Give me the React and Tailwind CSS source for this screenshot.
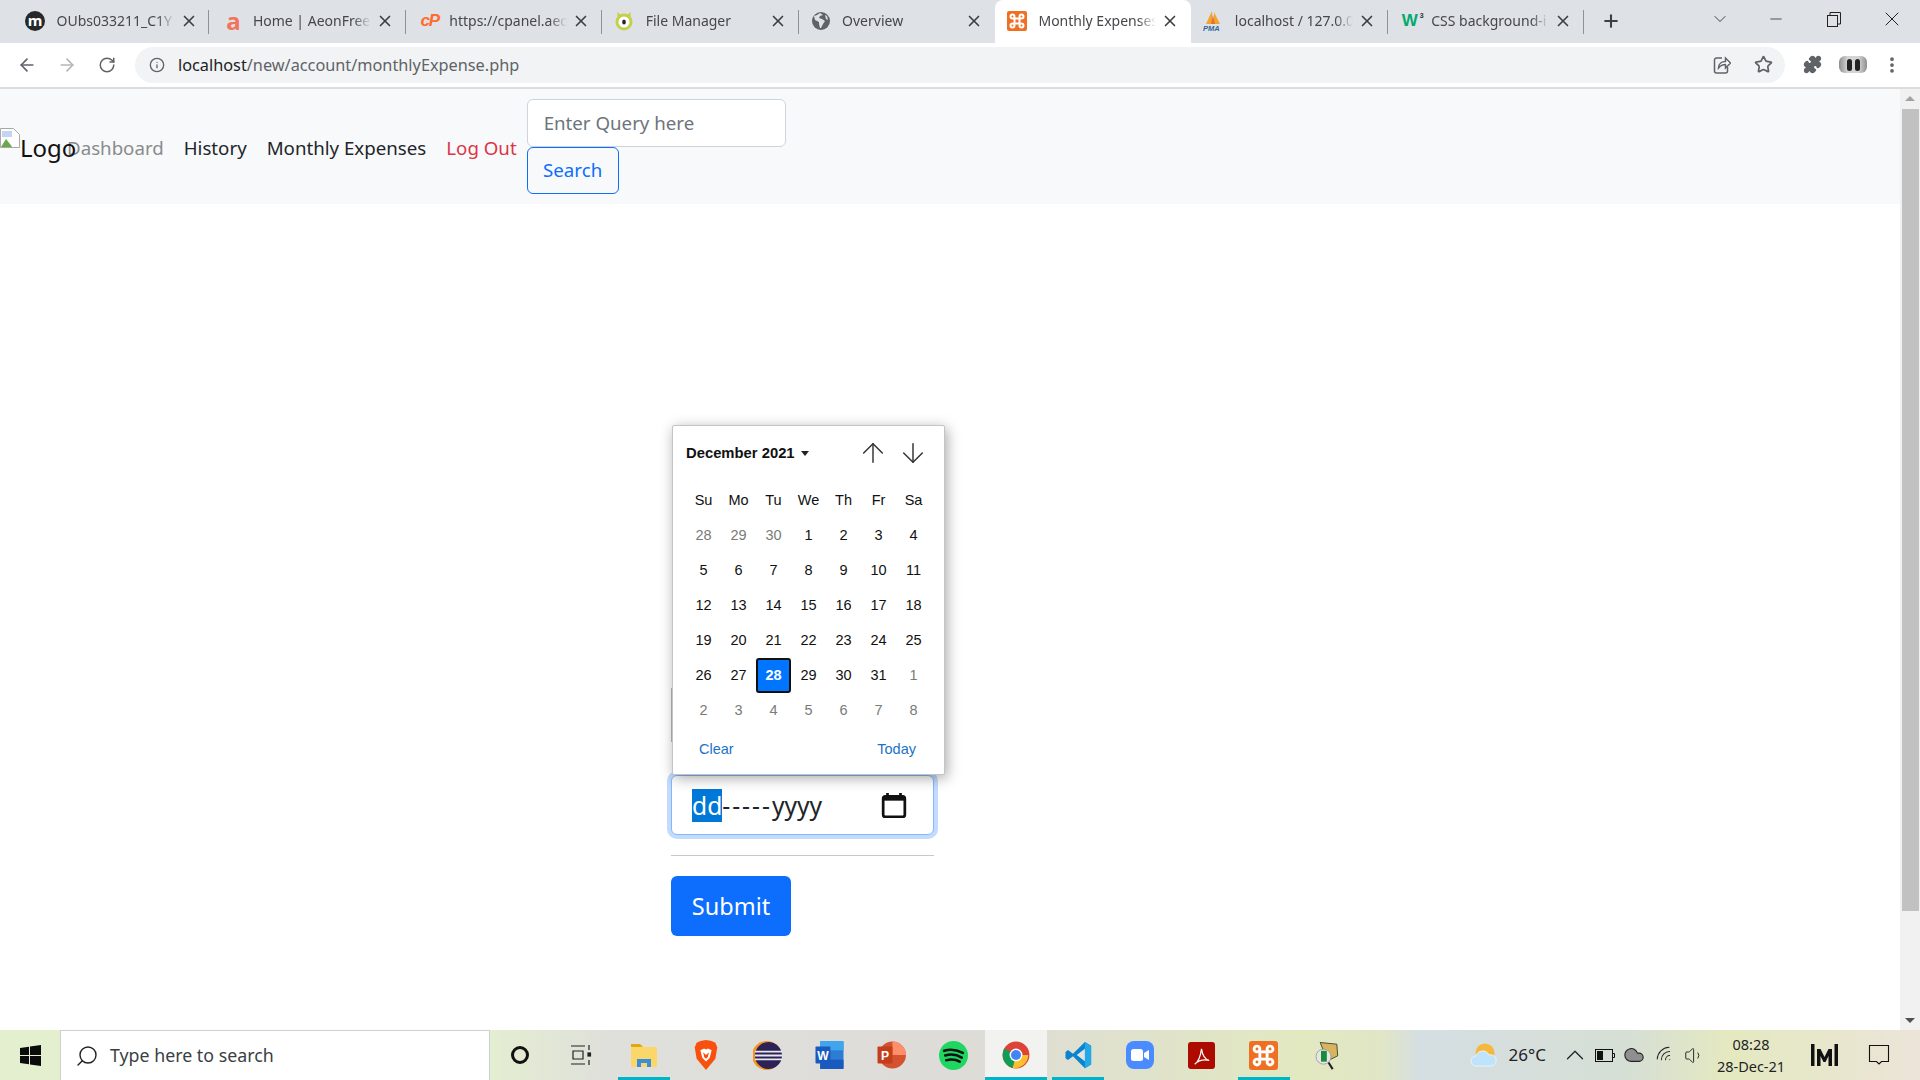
import { ArrowLeft, ArrowRight, RotateCw, Info, Star, Puzzle, EllipsisVertical, X, Plus, ChevronDown, ChevronUp, Minus, Search, ArrowUp, ArrowDown, Wifi, Volume1, Cloud } from "lucide-react";

const Moodle = () => (
  <span className="flex h-5 w-5 items-center justify-center rounded-full bg-[#26282a] text-[15px] font-bold leading-none text-white">m</span>
);
const Aeon = () => (
  <span className="ml-[2px] flex h-5 w-5 items-center justify-center text-[24px] font-bold leading-none text-[#f0755a] font-['Noto_Sans']">a</span>
);
const Cpanel = () => (
  <span className="flex h-5 w-6 items-center justify-center text-[17px] font-bold italic leading-none tracking-[-1px] text-[#ff6c2c] font-['Liberation_Sans']">cP</span>
);
const Monster = () => (
  <svg width="20" height="20" viewBox="0 0 20 20">
    <path d="M3 1l4 3-3 3zM17 1l-4 3 3 3z" fill="#c5d04a" />
    <circle cx="10" cy="11" r="8.500" fill="#c5d04a" />
    <circle cx="10" cy="11" r="5.500" fill="#fff" />
    <ellipse cx="10" cy="11" rx="1.800" ry="2.500" fill="#222" />
  </svg>
);
const Globe = () => (
  <svg width="20" height="20" viewBox="0 0 20 20">
    <circle cx="10" cy="10" r="9" fill="#5f6368" />
    <path d="M9 2l-3 2-3 1 1 4 4 2v2l1 4h1l2-4 2-3-3-2-3-1 1-2 3-1zM14 4l2 1 1 4-2-1z" fill="#dee1e6" />
  </svg>
);
const Xampp = ({ size = 20 }) => (
  <svg width={size} height={size} viewBox="0 0 20 20">
    <rect width="20" height="20" rx="2" fill="#ed7024" />
    <g fill="none" stroke="#fff" strokeWidth="2">
      <rect x="7.500" y="7.500" width="5" height="5" />
      <circle cx="5.500" cy="5.500" r="2" />
      <circle cx="14.500" cy="5.500" r="2" />
      <circle cx="5.500" cy="14.500" r="2" />
      <circle cx="14.500" cy="14.500" r="2" />
    </g>
  </svg>
);
const Pma = () => (
  <svg width="20" height="20" viewBox="0 0 20 20">
    <path d="M3 13L9 0l1 13zM11 13V1l6 12z" fill="#f3a32f" />
    <path d="M8 13l2-9 2 9z" fill="#e2742a" />
    <text x="0" y="19.500" fontSize="7.500" fontWeight="700" fontStyle="italic" fill="#34659a" fontFamily="Liberation Sans, sans-serif">PMA</text>
  </svg>
);
const W3 = () => (
  <span className="relative ml-[2px] flex h-5 w-5 items-center text-[17px] font-bold leading-none text-[#04aa6d] font-['Liberation_Sans']">
    W<span className="absolute right-[-2px] top-[1px] text-[7px] text-[#333]">3</span>
  </span>
);

const tabs = [
  { title: "OUbs033211_C1Y", icon: <Moodle /> },
  { title: "Home | AeonFree", icon: <Aeon /> },
  { title: "https://cpanel.aeon", icon: <Cpanel /> },
  { title: "File Manager", icon: <Monster /> },
  { title: "Overview", icon: <Globe /> },
  { title: "Monthly Expenses", icon: <Xampp />, active: true },
  { title: "localhost / 127.0.0", icon: <Pma /> },
  { title: "CSS background-i", icon: <W3 /> },
];

const TitleBar = () => (
  <div className="flex h-[43px] items-stretch bg-[#dee1e6] pl-[13px]">
    {tabs.map((tab, i) => {
      // no divider beside the active tab
      const divider = !tab.active && !(tabs[i + 1] && tabs[i + 1].active);
      return (
        <div
          key={tab.title}
          className={
            tab.active
              ? "relative flex w-[196.4px] items-center rounded-t-lg bg-white pb-[2px] pl-[12px]"
              : "relative flex w-[196.4px] items-center pb-[2px] pl-[12px]"
          }
        >
          <div className="flex w-[31.500px] shrink-0 items-center">{tab.icon}</div>
          <div className="w-[118px] overflow-hidden whitespace-nowrap text-[14px] text-[#45474a] [mask-image:linear-gradient(to_right,black_85%,transparent)]">
            {tab.title}
          </div>
          <X size={18} strokeWidth={2.200} className="ml-[5px] shrink-0 text-[#3c4043]" />
          {divider && <div className="absolute right-0 top-[10px] h-[24px] w-px bg-[#8f9296]" />}
        </div>
      );
    })}
    <div className="ml-[17px] flex items-center pb-[2px]">
      <Plus size={20} strokeWidth={2.500} className="text-[#3c4043]" />
    </div>
    <div className="ml-auto flex items-start">
      <div className="flex h-[38px] w-[46px] items-center justify-center">
        <ChevronDown size={20} strokeWidth={1} className="text-[#222]" />
      </div>
      <div className="ml-[4px] flex h-[38px] w-[58px] items-center justify-center">
        <Minus size={18} strokeWidth={1} className="text-[#222]" />
      </div>
      <div className="flex h-[38px] w-[58px] items-center justify-center">
        <svg width="14" height="15" viewBox="0 0 14 15" fill="none" stroke="#222">
          <rect x="0.500" y="3.500" width="10" height="11" />
          <path d="M3 3V.5h10.500V12H11" />
        </svg>
      </div>
      <div className="flex h-[38px] w-[57px] items-center justify-center">
        <X size={24} strokeWidth={1} className="text-[#222]" />
      </div>
    </div>
  </div>
);

const Toolbar = () => (
  <div className="flex h-[46px] items-center border-b-2 border-[#dcdcdc] bg-white pb-[1px]">
    <div className="flex w-[135px] items-center pl-[17px] text-[#5f6368]">
      <ArrowLeft size={20} />
      <ArrowRight size={20} className="ml-[20px] text-[#b4b6b9]" />
      <RotateCw size={18} className="ml-[21px]" />
    </div>
    <div className="flex h-[36px] w-[1650px] items-center rounded-full bg-[#f1f3f4] pl-[14px]">
      <Info size={16} className="text-[#5f6368]" />
      <div className="ml-[13px] mt-[1px] text-[16.300px] text-[#5f6368]">
        <span className="text-[#202124]">localhost</span>/new/account/monthlyExpense.php
      </div>
      <svg width="18" height="20" viewBox="0 0 18 20" fill="none" stroke="#5f6368" strokeWidth="1.500" className="ml-auto mr-[23px]">
        <path d="M9 3H3.500A2 2 0 0 0 1.500 5v11a2 2 0 0 0 2 2h9a2 2 0 0 0 2-2v-4" />
        <path d="M5.500 13c0-4 3-6.500 7-6.500V3l5 5-5 5V9.500c-3 0-5 1-7 3.500z" fill="#fff" />
      </svg>
      <Star size={19} className="mr-[12px] text-[#5f6368]" strokeWidth={2.200} />
    </div>
    <Puzzle size={19} className="ml-[18px] fill-[#5f6368] text-[#5f6368]" />
    <div className="ml-[17px] flex h-[17px] w-[28px] items-center justify-center gap-[3px] rounded-md bg-[linear-gradient(to_right,#8f8f8f,#d4d4d4_30%,#d4d4d4_70%,#8f8f8f)]">
      <span className="h-[12px] w-[5px] rounded-full bg-[#222]" />
      <span className="h-[12px] w-[5px] rounded-full bg-[#222]" />
    </div>
    <EllipsisVertical size={20} className="ml-[15px] text-[#5f6368]" strokeWidth={2.500} />
  </div>
);

const Navbar = () => (
  <nav className="flex h-[115px] items-center bg-[#f8f9fa] text-[18.700px]">
    <div className="flex items-center pt-[3px]">
      <div className="relative flex w-[67px] shrink-0 items-center">
        <svg width="20" height="20" viewBox="0 0 20 20" className="absolute left-0 top-[-8px]">
          <path d="M.5.5h13l6 6v13H.5z" fill="#fff" stroke="#a8a8a8" />
          <path d="M1 19l5-8 4 5 2 3z" fill="#6aa84f" />
          <path d="M2 3h10v6H2z" fill="#c3d5f0" />
        </svg>
        <span className="ml-[20px] text-[24px] leading-none text-[#111]">Logo</span>
      </div>
      <a className="whitespace-nowrap text-[#8a8b8c]">Dashboard</a>
      <a className="ml-[20px] whitespace-nowrap text-[#212529]">History</a>
      <a className="ml-[20px] whitespace-nowrap text-[#212529]">Monthly Expenses</a>
      <a className="ml-[20px] whitespace-nowrap text-[#dc3545]">Log Out</a>
    </div>
    <div className="ml-[10px] flex flex-col items-start">
      <div className="flex h-[48px] w-[259px] items-center rounded-md border border-[#ced4da] bg-white pl-[16px] text-[#6c757d]">
        Enter Query here
      </div>
      <div className="flex h-[47px] w-[92px] items-center justify-center rounded-md border border-[#0d6efd] text-[#0d6efd]">
        Search
      </div>
    </div>
  </nav>
);

const prevDays = [28, 29, 30];
const dec = Array.from({ length: 31 }, (_, i) => i + 1);
const nextDays = [1, 2, 3, 4, 5, 6, 7, 8];
const weekDays = ["Su", "Mo", "Tu", "We", "Th", "Fr", "Sa"];

const DayCell = ({ children, muted, selected }) => (
  <div
    className={
      selected
        ? "flex h-[35px] items-center justify-center rounded-[3px] border-2 border-[#101010] bg-[#0075ff] font-bold text-white"
        : muted
        ? "flex h-[35px] items-center justify-center text-[#7a7a7a]"
        : "flex h-[35px] items-center justify-center text-[#111]"
    }
  >
    {children}
  </div>
);

const DatePopup = () => (
  <div className="absolute left-[672px] top-[221px] h-[350px] w-[273px] rounded-[2px] border border-[#c4c4c4] bg-white font-['Liberation_Sans'] text-[14.500px] shadow-[2px_3px_14px_rgba(0,0,0,0.35)]">
    <div className="flex h-[57px] items-center pb-[3px] pl-[13px]">
      <span className="text-[14.800px] font-bold text-[#111]">December 2021</span>
      <span className="ml-[6px] mt-[1px] h-0 w-0 border-x-[4.500px] border-t-[5px] border-x-transparent border-t-[#222]" />
      <ArrowUp size={32} strokeWidth={1.100} className="ml-auto text-[#333]" />
      <ArrowDown size={32} strokeWidth={1.100} className="ml-[8px] mr-[15px] text-[#333]" />
    </div>
    <div className="grid grid-cols-[repeat(7,35px)] pl-[13px]">
      {weekDays.map((d) => (
        <div key={d} className="flex h-[35px] items-center justify-center text-[#111]">{d}</div>
      ))}
      {prevDays.map((d) => <DayCell key={`p${d}`} muted>{d}</DayCell>)}
      {dec.map((d) => <DayCell key={d} selected={d === 28}>{d}</DayCell>)}
      {nextDays.map((d) => <DayCell key={`n${d}`} muted>{d}</DayCell>)}
    </div>
    <div className="flex justify-between pl-[26px] pr-[28px] pt-[11px] text-[#1a73c8]">
      <span>Clear</span>
      <span>Today</span>
    </div>
  </div>
);

const MainForm = () => (
  <main className="relative flex-1 bg-white">
    <div className="ml-[671px] w-[263px] pt-[571px]">
      <div className="flex h-[60px] items-center rounded-md border border-[#86b7fe] bg-white pl-[20px] pr-[26px] text-[24.600px] text-[#212529] shadow-[0_0_0_4px_rgba(13,110,253,0.25)]">
        <span className="inline-block h-[33px] bg-[#0078d7] leading-[33px] text-white">dd</span>
        <span className="inline-block h-[33px] leading-[33px]">
          <span className="tracking-[2px]">-----</span>yyyy
        </span>
        <svg width="26" height="26" viewBox="0 0 24 24" className="ml-auto">
          <path d="M6 1v3M18 1v3" stroke="#111" strokeWidth="2.500" />
          <rect x="2" y="4" width="20" height="19" rx="2" fill="none" stroke="#111" strokeWidth="2.500" />
          <path d="M2 4h20v4H2z" fill="#111" />
        </svg>
      </div>
      <hr className="mt-[20px] border-[#c8c8c8]" />
      <button className="mt-[20px] flex h-[60px] w-[120px] items-center justify-center rounded-md bg-[#0d6efd] pt-[1px] text-[23.500px] text-white">
        Submit
      </button>
    </div>
    {/* edge of the field hidden behind the popup */}
    <div className="absolute left-[671px] top-[484px] h-[54px] w-[2px] bg-[#b8b8b8]" />
    <DatePopup />
  </main>
);

const Scrollbar = () => (
  <div className="flex w-[20px] flex-col items-center bg-[#f1f1f1]">
    <div className="mt-[7px] h-0 w-0 border-x-[5px] border-b-[5px] border-x-transparent border-b-[#a3a3a3]" />
    <div className="mt-[8px] h-[802px] w-[17px] bg-[#c1c1c1]" />
    <div className="mb-[7px] mt-auto h-0 w-0 border-x-[5px] border-t-[5px] border-x-transparent border-t-[#505050]" />
  </div>
);

const Edge = () => (
  <svg width="30" height="30" viewBox="0 0 24 24">
    <path d="M17.500 1.500l5 3v15l-5 3L8 13l-4 3-2-1.500V9.500L4 8l4 3z" fill="#0a84ce" />
    <path d="M17.500 1.500l5 3v15l-5 3z" fill="#23a8ea" />
    <path d="M17.500 7v10L11 12z" fill="#e4e4de" />
  </svg>
);

const Chrome = () => (
  <svg width="28" height="28" viewBox="0 0 24 24">
    <circle cx="12" cy="12" r="11.500" fill="#db4437" />
    <path d="M12 12l10.500 0A11.500 11.500 0 0 1 9 23.100z" fill="#fbc02d" />
    <path d="M12 12L9 23.100A11.500 11.500 0 0 1 2 6.500z" fill="#0f9d58" />
    <circle cx="12" cy="12" r="5.500" fill="#fff" />
    <circle cx="12" cy="12" r="4.300" fill="#4285f4" />
  </svg>
);

// icons of the taskbar, every cell is 62px wide
const taskIcons = [
  { on: true, node: (
    <svg width="28" height="26" viewBox="0 0 28 26">
      <path d="M1 2h9l3 3H1z" fill="#e2a712" />
      <rect x="1" y="5" width="26" height="20" rx="1" fill="#fbd669" />
      <path d="M7 25v-8h14v8h-4v-4h-6v4z" fill="#3a8fd8" />
    </svg>
  ) },
  { node: (
    <svg width="26" height="30" viewBox="0 0 24 32">
      <path d="M2 3l4-2 6-1 6 1 4 2 2 5-2 12-10 12L2 20 0 8z" fill="#f8500f" />
      <path d="M6 11l4-2 2 1 2-1 4 2-2 8-4 4-4-4z" fill="#fff" />
      <path d="M9 13l3 3 3-3-1 5-2 2-2-2z" fill="#f8500f" />
    </svg>
  ) },
  { node: (
    <svg width="29" height="29" viewBox="0 0 30 30">
      <circle cx="14" cy="15" r="15" fill="#f7941e" />
      <circle cx="16" cy="15" r="14" fill="#2c2255" />
      <path d="M2 11h28M2 15h28M2 19h28" stroke="#e8e8f0" strokeWidth="2" />
    </svg>
  ) },
  { node: (
    <svg width="29" height="28" viewBox="0 0 30 30">
      <rect x="5" y="0" width="25" height="30" rx="1.500" fill="#2b7cd3" />
      <rect x="5" y="0" width="25" height="10" fill="#41a5ee" />
      <rect x="5" y="20" width="25" height="10" fill="#185abd" />
      <rect x="0" y="6" width="16" height="18" rx="1" fill="#185abd" />
      <text x="8" y="20" textAnchor="middle" fontSize="13" fontWeight="700" fill="#fff" fontFamily="Liberation Sans, sans-serif">W</text>
    </svg>
  ) },
  { node: (
    <svg width="29" height="28" viewBox="0 0 30 30">
      <circle cx="16" cy="15" r="14.500" fill="#d35230" />
      <path d="M16 .5A14.500 14.500 0 0 1 30.500 15H16z" fill="#ff8f6b" />
      <rect x="0" y="6" width="16" height="18" rx="1" fill="#c43e1c" />
      <text x="8" y="20" textAnchor="middle" fontSize="13" fontWeight="700" fill="#fff" fontFamily="Liberation Sans, sans-serif">P</text>
    </svg>
  ) },
  { node: (
    <svg width="29" height="29" viewBox="0 0 28 28">
      <circle cx="14" cy="14" r="14" fill="#1ed760" />
      <path d="M5 9.500c6-2 12-1 18 2M6 14c5-1.500 11-1 16 2M7 18.500c4-1 9-1 13 1.500" fill="none" stroke="#111" strokeWidth="2.500" strokeLinecap="round" />
    </svg>
  ) },
  { on: true, active: true, node: <Chrome /> },
  { on: true, node: <Edge /> },
  { node: (
    <svg width="28" height="28" viewBox="0 0 28 28">
      <rect width="28" height="28" rx="8" fill="#4a8cff" />
      <rect x="5" y="8" width="12" height="12" rx="2.500" fill="#fff" />
      <path d="M18 12l5-3v10l-5-3z" fill="#fff" />
    </svg>
  ) },
  { node: (
    <svg width="27" height="27" viewBox="0 0 28 28">
      <rect width="28" height="28" rx="3" fill="#ad0b00" />
      <path d="M7 23c3-2 6-8 7-16 1 7 3 11 8 12-5-1-11 0-15 4z" fill="none" stroke="#fff" strokeWidth="1.300" />
    </svg>
  ) },
  { on: true, node: <Xampp size={29} /> },
  { node: (
    <svg width="28" height="30" viewBox="0 0 30 36">
      <path d="M8 3l20 2 1 14-12 6z" fill="#d9b45c" stroke="#333" />
      <circle cx="12" cy="20" r="9" fill="#e6e6e6" stroke="#999" />
      <path d="M9 13h7v13H9z" fill="#1c8a3c" />
      <path d="M18 27l5 8" stroke="#222" strokeWidth="2.500" />
    </svg>
  ) },
];

const Taskbar = () => (
  <div className="flex h-[50px] items-stretch bg-[linear-gradient(to_right,#e4efd0_0%,#e4efd0_25%,#dfdfdb_32%,#dddcd8_50%,#e2e8c0_68%,#e0e6c6_72%,#d5dee2_74%,#d6dfd4_85%,#e4e9c0_90%,#ebe4d8_100%)]">
    <div className="flex w-[60px] items-center justify-center">
      <svg width="21" height="21" viewBox="0 0 21 21" fill="#0b0b0b">
        <path d="M0 3l9-1.300V10H0zM10 1.500L21 0v10H10zM0 11h9v8.300L0 18zM10 11h11v10l-11-1.500z" />
      </svg>
    </div>
    <div className="flex w-[430px] items-center border border-b-0 border-[#cfcfcf] bg-white pl-[14px] text-[17.800px] text-[#3a3f45]">
      <Search size={24} strokeWidth={1.400} className="-scale-x-100 text-[#222]" />
      <span className="ml-[11px]">Type here to search</span>
    </div>
    <div className="flex w-[60px] items-center justify-center">
      <span className="h-[18px] w-[18px] rounded-full border-[3px] border-[#111]" />
    </div>
    <div className="flex w-[62.500px] items-center justify-center">
      <svg width="22" height="24" viewBox="0 0 22 24" fill="none" stroke="#222" strokeWidth="1.200">
        <path d="M1 3h14M1 21h14M3 8h10v8H3zM19 2v5M19 17v5" />
        <rect x="18" y="10" width="2.500" height="3" fill="#222" />
      </svg>
    </div>
    {taskIcons.map((item, i) => (
      <div
        key={i}
        className={
          item.active
            ? "relative flex w-[62px] items-center justify-center bg-[#f2f2f0]"
            : "relative flex w-[62px] items-center justify-center"
        }
      >
        {item.node}
        {item.on && (
          <div
            className={
              item.active
                ? "absolute bottom-0 left-0 right-0 h-[3px] bg-[#00b4c8]"
                : "absolute bottom-0 left-[5px] right-[5px] h-[3px] bg-[#00b4c8]"
            }
          />
        )}
      </div>
    ))}
    <div className="ml-auto flex items-center text-[#1f2328]">
      <svg width="28" height="24" viewBox="0 0 28 24">
        <circle cx="15" cy="10" r="9.500" fill="#f5b83d" />
        <path d="M6 23a5 5 0 0 1 0-10 7 7 0 0 1 13-1 5.500 5.500 0 0 1 3 11z" fill="#bfe3fa" stroke="#e9f4fb" />
      </svg>
      <span className="ml-[11px] text-[17px]">26°C</span>
      <ChevronUp size={30} strokeWidth={1} className="ml-[14px]" />
      <svg width="20" height="13" viewBox="0 0 20 13" className="ml-[5px]" fill="none" stroke="#111">
        <rect x="0.500" y="0.500" width="17" height="12" />
        <rect x="2" y="2" width="6" height="9" fill="#111" stroke="none" />
        <path d="M18 4.500h1.500v4H18" />
      </svg>
      <Cloud size={22} strokeWidth={1.200} className="ml-[8px] fill-[#8f8f8f] text-[#222]" />
      <Wifi size={20} strokeWidth={1.200} className="ml-[10px] -rotate-45 text-[#222]" />
      <Volume1 size={21} strokeWidth={1.100} className="ml-[9px] text-[#222]" />
      <div className="ml-[8px] flex w-[76px] flex-col items-center pb-[1px] text-[14.500px] leading-[22px]">
        <span>08:28</span>
        <span>28-Dec-21</span>
      </div>
      <svg width="27" height="22" viewBox="0 0 27 22" fill="#111" className="ml-[22px]">
        <rect x="0" y="0" width="3.500" height="22" />
        <rect x="23.500" y="0" width="3.500" height="22" />
        <path d="M6 5h3.500l4 8 4-8H21v17h-3.500V12l-3 6h-2l-3-6v10H6z" />
      </svg>
      <svg width="24" height="24" viewBox="0 0 24 24" fill="none" stroke="#111" strokeWidth="1.100" className="ml-[29px] mr-[29px]">
        <path d="M2.500 2.500h19v16h-7l-2.500 2.500-2.500-2.500h-7z" />
      </svg>
    </div>
  </div>
);

export default function App() {
  return (
    <div className="flex h-[1080px] w-[1920px] flex-col overflow-hidden font-['Noto_Sans',sans-serif]">
      <TitleBar />
      <Toolbar />
      <div className="flex min-h-0 flex-1">
        <div className="flex min-w-0 flex-1 flex-col">
          <Navbar />
          <MainForm />
        </div>
        <Scrollbar />
      </div>
      <Taskbar />
    </div>
  );
}
